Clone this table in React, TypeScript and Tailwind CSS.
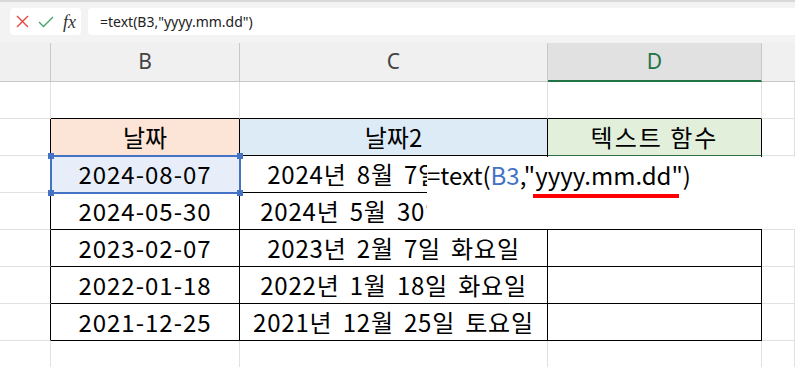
import React from 'react';

const KR = { fontFamily: '"Noto Sans CJK KR", "Noto Sans", sans-serif' };

const rows = [
  ['2024-08-07', '2024년 8월 7일 화요일'],
  ['2024-05-30', '2024년 5월 30일 목요일'],
  ['2023-02-07', '2023년 2월 7일 화요일'],
  ['2022-01-18', '2022년 1월 18일 화요일'],
  ['2021-12-25', '2021년 12월 25일 토요일'],
];

const grid = 'grid grid-cols-[51px_189px_308px_214px_1fr]';
const cell = 'h-[37px] border-r border-b border-[#e1e1e1] flex items-center justify-center overflow-hidden whitespace-nowrap';

const App: React.FC = () => {
  return (
    <div className="relative w-[795px] h-[367px] overflow-hidden bg-white" style={KR}>
      {/* formula bar */}
      <div className="h-[43px] bg-[#f3f3f3] border-t-2 border-[#d8d8d8] flex items-start gap-[7px] pl-[10px] pt-[6px]">
        <div className="w-[71px] h-[27px] bg-white rounded-[4px] flex items-center gap-[9px] pl-[6px]">
          <svg width="13" height="13" viewBox="0 0 13 13">
            <path d="M1 1L12 12M12 1L1 12" stroke="#e5463f" strokeWidth="1.4" fill="none" />
          </svg>
          <svg width="16" height="12" viewBox="0 0 16 12">
            <path d="M1 6L5.5 10.5L15 1" stroke="#4aa36b" strokeWidth="1.4" fill="none" />
          </svg>
          <span className="text-[18px] leading-none italic text-[#333]" style={{ fontFamily: '"Liberation Serif", serif' }}>fx</span>
        </div>
        <div className="flex-1 h-[27px] bg-white rounded-l-[4px] flex items-center pl-[12px] text-[14px] text-[#222]" style={{ fontFamily: '"Noto Sans", sans-serif' }}>
          =text(B3,"yyyy.mm.dd")
        </div>
      </div>

      {/* column headers */}
      <div className={`${grid} h-[39px] bg-[#f0f0f0] text-[21px] text-[#444]`} style={{ fontFamily: '"Noto Sans", sans-serif' }}>
        <div className="border-r border-b border-[#c8c8c8]" />
        <div className="border-r border-b border-[#c8c8c8] flex items-center justify-center">B</div>
        <div className="border-r border-b border-[#c8c8c8] flex items-center justify-center">C</div>
        <div className="border-r border-b-2 border-r-[#c8c8c8] border-b-[#217346] bg-[#e1e1e1] flex items-center justify-center text-[#217346]">D</div>
        <div className="border-b border-[#c8c8c8]" />
      </div>

      {/* sheet */}
      <div className={`${grid} text-[24px] text-black`}>
        {/* row 1 */}
        <div className={cell} />
        <div className={`${cell} border-b-black`} />
        <div className={`${cell} border-b-black`} />
        <div className={`${cell} border-b-black`} />
        <div className={cell} />

        {/* header row */}
        <div className={`${cell} border-r-black`} />
        <div className={`${cell} border-black bg-[#fce4d6]`}>날짜</div>
        <div className={`${cell} border-black bg-[#ddebf7]`}>날짜2</div>
        <div className={`${cell} border-r-black border-b-[#2c6e45] bg-[#e2efda] tracking-[2px]`}>텍스트 함수</div>
        <div className={cell} />

        {rows.map(([d, k], i) => (
          <React.Fragment key={d}>
            <div className={`${cell} border-r-black`} />
            <div className={`${cell} border-black tracking-[1px] ${i === 0 ? 'bg-[#e8eef9]' : ''}`}>{d}</div>
            <div className={`${cell} border-black tracking-[0.8px] [word-spacing:4px]`}>{k}</div>
            <div className={`${cell} border-black`} />
            <div className={cell} />
          </React.Fragment>
        ))}

        <div className={cell} />
        <div className={cell} />
        <div className={cell} />
        <div className={cell} />
        <div className={cell} />
      </div>

      {/* selection on B3 */}
      <div className="absolute left-[50px] top-[155px] w-[191px] h-[39px] border-2 border-[#4472c4]" />
      <div className="absolute left-[48px] top-[153px] w-[6px] h-[6px] bg-[#4472c4]" />
      <div className="absolute left-[237px] top-[153px] w-[6px] h-[6px] bg-[#4472c4]" />
      <div className="absolute left-[48px] top-[190px] w-[6px] h-[6px] bg-[#4472c4]" />
      <div className="absolute left-[237px] top-[190px] w-[6px] h-[6px] bg-[#4472c4]" />

      {/* formula being typed */}
      <div className="absolute left-[427px] top-[157px] right-0 h-[72px] bg-white">
        <div className="relative h-[36px] flex items-center text-[24px] text-black whitespace-nowrap">
          =text(<span className="text-[#4472c4]">B3</span>,"yyyy.mm.dd")
        </div>
        <div className="absolute left-[106px] top-[37px] w-[146px] h-[4px] bg-[#ff0000]" />
      </div>
    </div>
  );
};

export default App;
